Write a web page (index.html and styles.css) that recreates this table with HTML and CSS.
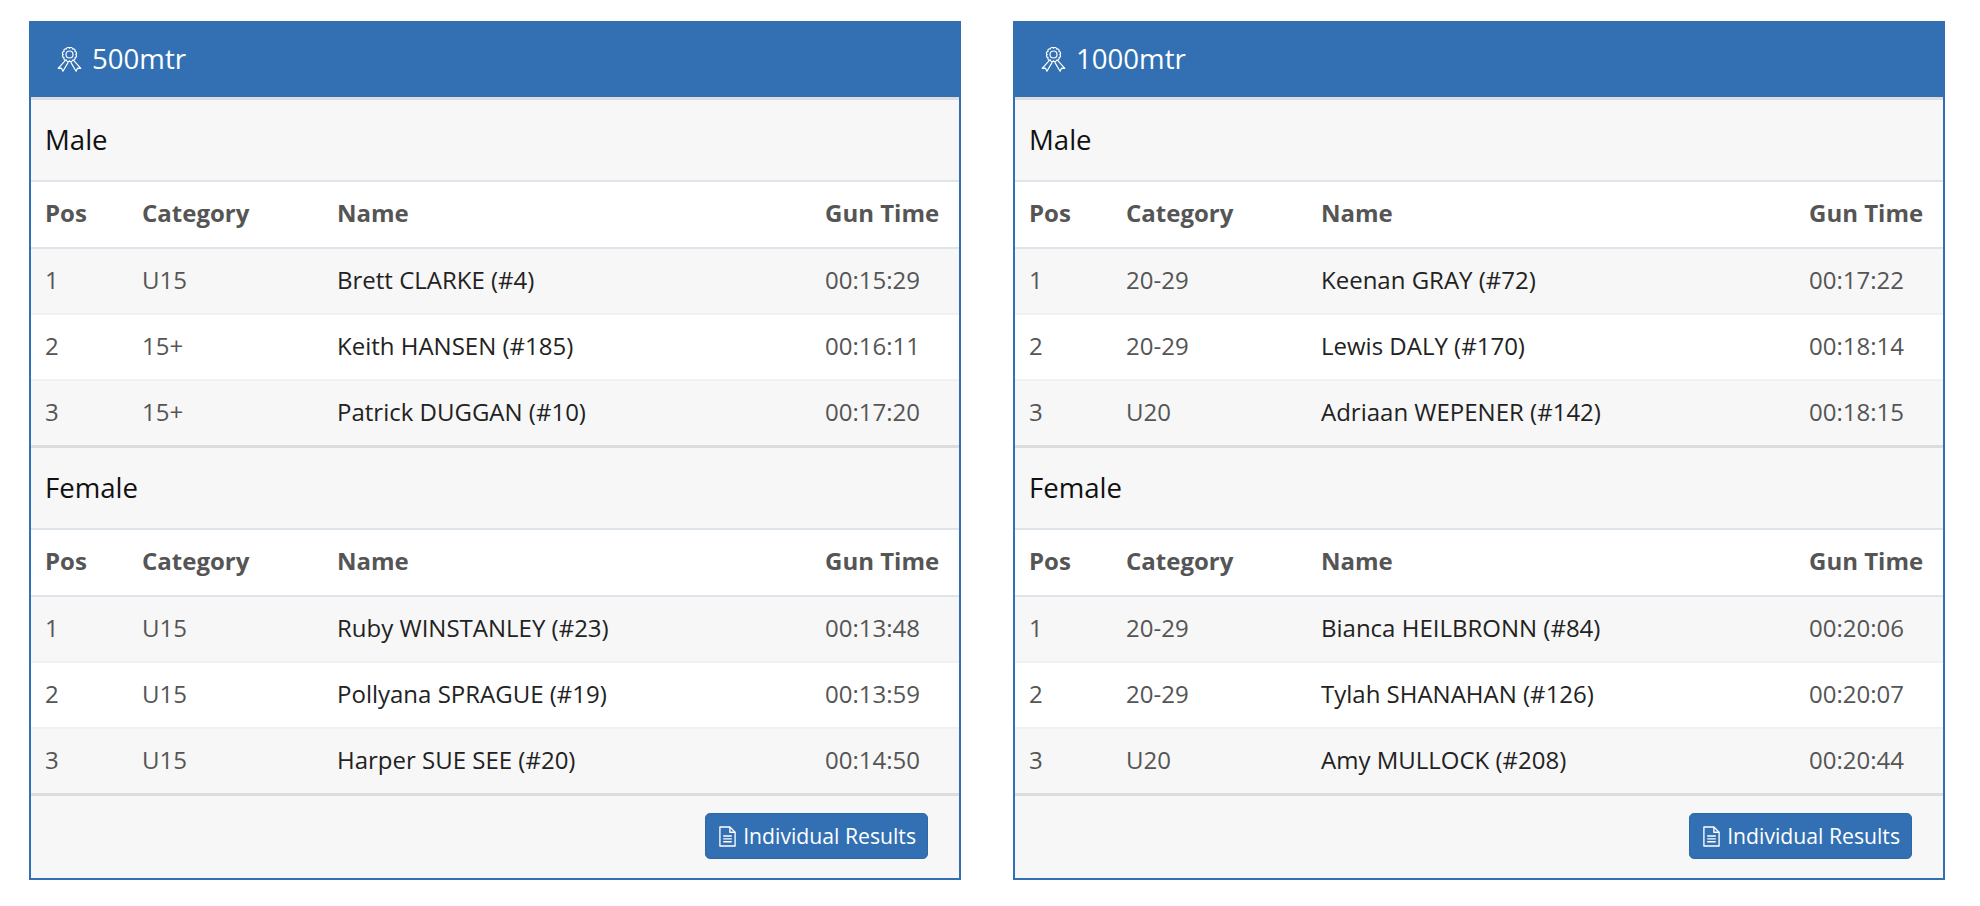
FILE: index.html
```html
<!DOCTYPE html>
<html lang="en">
<head>
<meta charset="utf-8">
<title>Results</title>
<link rel="stylesheet" href="styles.css">
</head>
<body>
<div class="page">
  <section class="panel">
    <div class="panel-heading">
      <svg class="award" viewBox="0 0 25 25" aria-hidden="true">
        <path d="M18.8 7.5 A1.75 1.75 0 0 1 17.96 10.65 A1.75 1.75 0 0 1 15.65 12.96 A1.75 1.75 0 0 1 12.5 13.8 A1.75 1.75 0 0 1 9.35 12.96 A1.75 1.75 0 0 1 7.04 10.65 A1.75 1.75 0 0 1 6.2 7.5 A1.75 1.75 0 0 1 7.04 4.35 A1.75 1.75 0 0 1 9.35 2.04 A1.75 1.75 0 0 1 12.5 1.2 A1.75 1.75 0 0 1 15.65 2.04 A1.75 1.75 0 0 1 17.96 4.35 A1.75 1.75 0 0 1 18.8 7.5 Z"/>
        <circle cx="12.5" cy="7.5" r="3.5"/>
        <path d="M8.4 13.4 L1.2 21.4 L4.5 21.2 L5.9 24.2 L11 15.6"/>
        <path d="M16.6 13.4 L23.8 21.4 L20.5 21.2 L19.1 24.2 L14 15.6"/>
      </svg>
      <span>500mtr</span>
    </div>
    <table class="results">
      <colgroup><col class="c-pos"><col class="c-cat"><col class="c-name"><col class="c-time"></colgroup>
      <tbody>
        <tr class="group"><td colspan="4">Male</td></tr>
        <tr class="head"><th>Pos</th><th>Category</th><th>Name</th><th>Gun Time</th></tr>
        <tr class="odd"><td>1</td><td>U15</td><td class="name">Brett CLARKE (#4)</td><td>00:15:29</td></tr>
        <tr><td>2</td><td>15+</td><td class="name">Keith HANSEN (#185)</td><td>00:16:11</td></tr>
        <tr class="odd"><td>3</td><td>15+</td><td class="name">Patrick DUGGAN (#10)</td><td>00:17:20</td></tr>
      </tbody>
      <tbody>
        <tr class="group"><td colspan="4">Female</td></tr>
        <tr class="head"><th>Pos</th><th>Category</th><th>Name</th><th>Gun Time</th></tr>
        <tr class="odd"><td>1</td><td>U15</td><td class="name">Ruby WINSTANLEY (#23)</td><td>00:13:48</td></tr>
        <tr><td>2</td><td>U15</td><td class="name">Pollyana SPRAGUE (#19)</td><td>00:13:59</td></tr>
        <tr class="odd"><td>3</td><td>U15</td><td class="name">Harper SUE SEE (#20)</td><td>00:14:50</td></tr>
      </tbody>
    </table>
    <div class="panel-footer">
      <a class="btn" href="#">
        <svg class="file" viewBox="0 0 20 22" aria-hidden="true">
          <path d="M2 1 H12.5 L18 6.5 V21 H2 Z"/>
          <path d="M12.5 1 V6.5 H18"/>
          <path d="M5.5 10.5 H14.5 M5.5 13.5 H14.5 M5.5 16.5 H14.5"/>
        </svg>
        <span>Individual Results</span>
      </a>
    </div>
  </section>

  <section class="panel">
    <div class="panel-heading">
      <svg class="award" viewBox="0 0 25 25" aria-hidden="true">
        <path d="M18.8 7.5 A1.75 1.75 0 0 1 17.96 10.65 A1.75 1.75 0 0 1 15.65 12.96 A1.75 1.75 0 0 1 12.5 13.8 A1.75 1.75 0 0 1 9.35 12.96 A1.75 1.75 0 0 1 7.04 10.65 A1.75 1.75 0 0 1 6.2 7.5 A1.75 1.75 0 0 1 7.04 4.35 A1.75 1.75 0 0 1 9.35 2.04 A1.75 1.75 0 0 1 12.5 1.2 A1.75 1.75 0 0 1 15.65 2.04 A1.75 1.75 0 0 1 17.96 4.35 A1.75 1.75 0 0 1 18.8 7.5 Z"/>
        <circle cx="12.5" cy="7.5" r="3.5"/>
        <path d="M8.4 13.4 L1.2 21.4 L4.5 21.2 L5.9 24.2 L11 15.6"/>
        <path d="M16.6 13.4 L23.8 21.4 L20.5 21.2 L19.1 24.2 L14 15.6"/>
      </svg>
      <span>1000mtr</span>
    </div>
    <table class="results">
      <colgroup><col class="c-pos"><col class="c-cat"><col class="c-name"><col class="c-time"></colgroup>
      <tbody>
        <tr class="group"><td colspan="4">Male</td></tr>
        <tr class="head"><th>Pos</th><th>Category</th><th>Name</th><th>Gun Time</th></tr>
        <tr class="odd"><td>1</td><td>20-29</td><td class="name">Keenan GRAY (#72)</td><td>00:17:22</td></tr>
        <tr><td>2</td><td>20-29</td><td class="name">Lewis DALY (#170)</td><td>00:18:14</td></tr>
        <tr class="odd"><td>3</td><td>U20</td><td class="name">Adriaan WEPENER (#142)</td><td>00:18:15</td></tr>
      </tbody>
      <tbody>
        <tr class="group"><td colspan="4">Female</td></tr>
        <tr class="head"><th>Pos</th><th>Category</th><th>Name</th><th>Gun Time</th></tr>
        <tr class="odd"><td>1</td><td>20-29</td><td class="name">Bianca HEILBRONN (#84)</td><td>00:20:06</td></tr>
        <tr><td>2</td><td>20-29</td><td class="name">Tylah SHANAHAN (#126)</td><td>00:20:07</td></tr>
        <tr class="odd"><td>3</td><td>U20</td><td class="name">Amy MULLOCK (#208)</td><td>00:20:44</td></tr>
      </tbody>
    </table>
    <div class="panel-footer">
      <a class="btn" href="#">
        <svg class="file" viewBox="0 0 20 22" aria-hidden="true">
          <path d="M2 1 H12.5 L18 6.5 V21 H2 Z"/>
          <path d="M12.5 1 V6.5 H18"/>
          <path d="M5.5 10.5 H14.5 M5.5 13.5 H14.5 M5.5 16.5 H14.5"/>
        </svg>
        <span>Individual Results</span>
      </a>
    </div>
  </section>
</div>
</body>
</html>
```

FILE: styles.css
```css
html, body {
  margin: 0;
  padding: 0;
  background: #ffffff;
}

body {
  font-family: "Open Sans", "Liberation Sans", sans-serif;
  color: #333333;
}

.page {
  display: grid;
  grid-template-columns: 932px 932px;
  column-gap: 52px;
  padding: 21px 0 0 29px;
  align-items: start;
}

.panel {
  border: 2px solid #3270b3;
  background: #ffffff;
}

.panel-heading {
  background: #3270b3;
  color: #ffffff;
  height: 74px;
  box-sizing: border-box;
  padding: 19px 27px 23px 26px;
  display: flex;
  align-items: center;
  gap: 10px;
  font-size: 27.6px;
  line-height: 32px;
}

.award {
  width: 25px;
  height: 25px;
  flex: none;
  fill: none;
  stroke: #ffffff;
  stroke-width: 1.2;
  stroke-linejoin: round;
  stroke-linecap: round;
  margin-top: 2px;
}

.results {
  width: 100%;
  border-collapse: separate;
  border-spacing: 0;
  table-layout: fixed;
  font-size: 24px;
  line-height: 36px;
}

.c-pos { width: 97px; }
.c-cat { width: 195px; }
.c-name { width: 488px; }
.c-time { width: 148px; }

.results td,
.results th {
  text-align: left;
  padding: 13px 14px 15px 14px;
  border-top: 2px solid #f1f1f1;
  color: #555555;
  white-space: nowrap;
}

.results th {
  font-weight: 700;
  border-top-color: #dfe4ea;
}

.results tr.head th {
  padding-bottom: 16px;
}

.results tr.head + tr td {
  border-top-color: #dfe4ea;
}

.results td.name {
  color: #222222;
}

.results tr.odd td {
  background: #f7f7f7;
}

.results tr.group td {
  background: #f7f7f7;
  border-top: 3px solid #dddddd;
  color: #111111;
  font-size: 27.6px;
  line-height: 40px;
  padding: 19px 14px 21px 14px;
}

.panel-footer {
  background: #f7f7f7;
  border-top: 3px solid #dddddd;
  display: flex;
  justify-content: flex-end;
  padding: 17px 31px 19px 27px;
}

.btn {
  display: inline-flex;
  align-items: center;
  gap: 6px;
  height: 46px;
  box-sizing: border-box;
  padding: 0 11px 0 12px;
  background: #3270b3;
  border: 1px solid #2d67a6;
  border-radius: 5px;
  color: #ffffff;
  text-decoration: none;
  font-size: 21.2px;
  line-height: 32px;
}

.file {
  width: 19px;
  height: 21px;
  flex: none;
  fill: none;
  stroke: #ffffff;
  stroke-width: 1.4;
  stroke-linejoin: round;
}
```
